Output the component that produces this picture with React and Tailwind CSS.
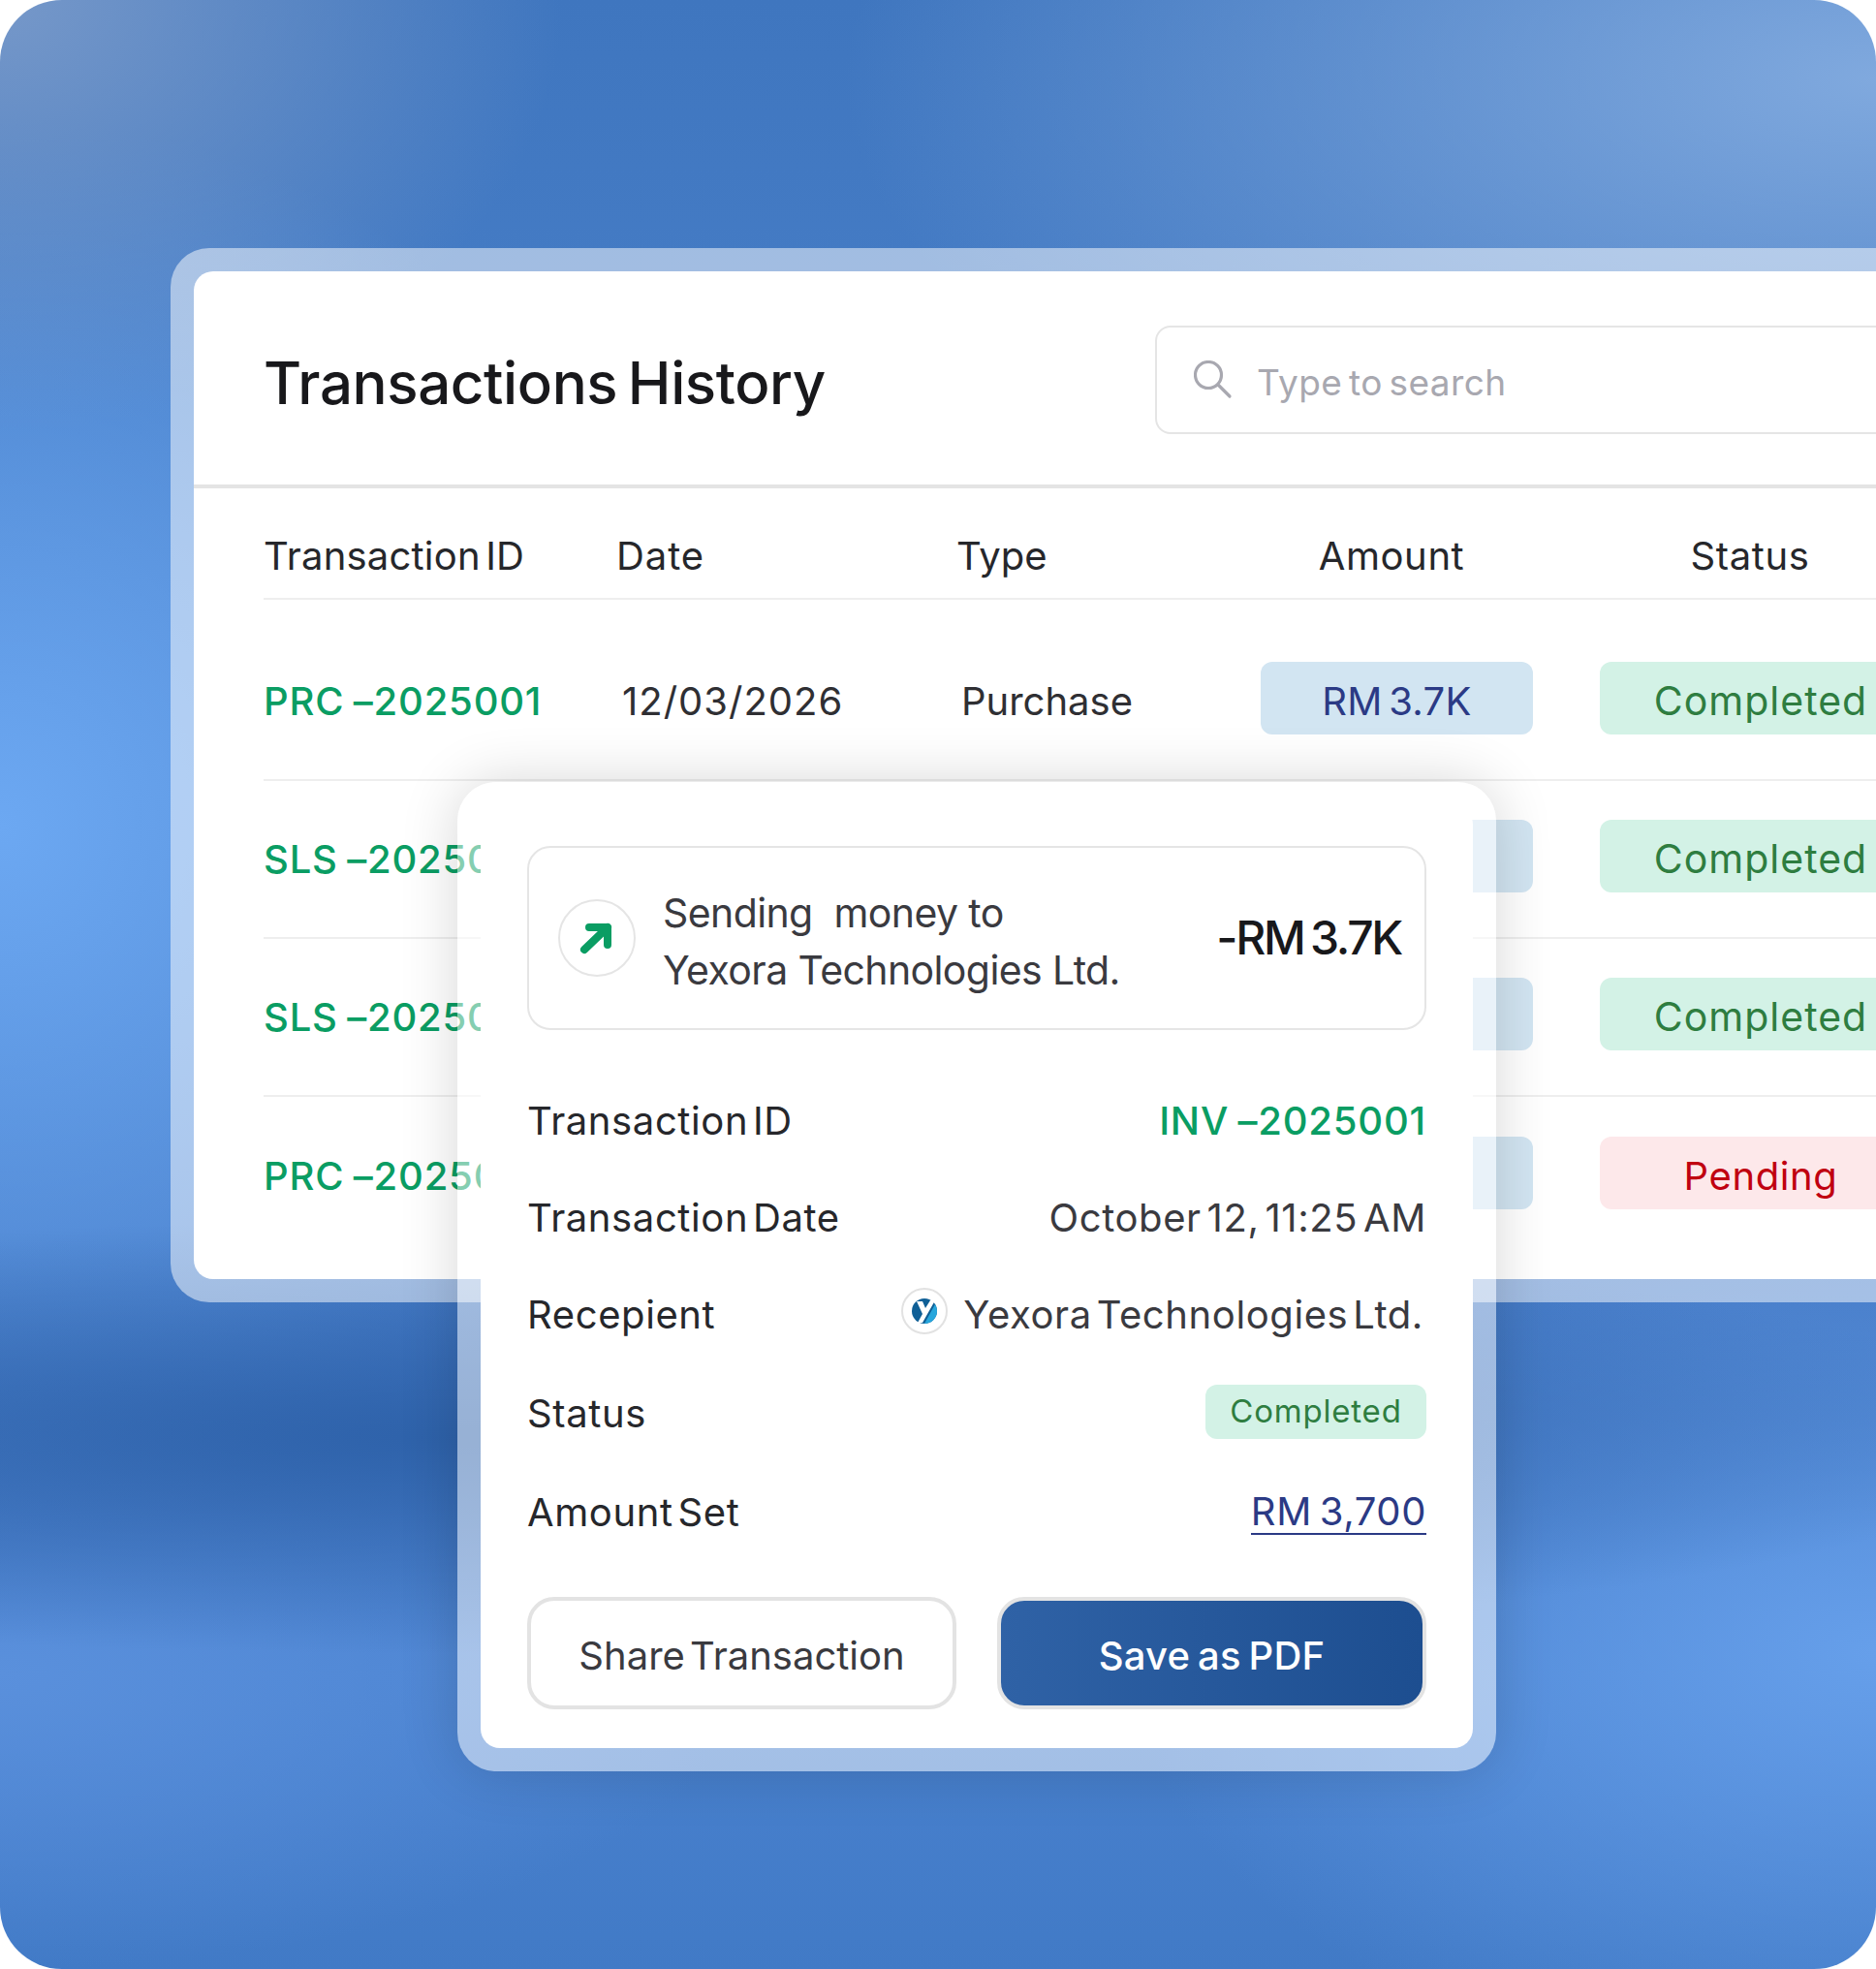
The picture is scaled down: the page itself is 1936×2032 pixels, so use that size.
const F = { fontFamily: "Inter, 'Liberation Sans', sans-serif" };

const rows = [
  { id: "PRC –2025001", status: "Completed", date: "12/03/2026", type: "Purchase", amount: "RM 3.7K", pt: "pt-[64px]" },
  { id: "SLS –2025002", status: "Completed", pt: "pt-[40px]" },
  { id: "SLS –2025003", status: "Completed", pt: "pt-[40px]" },
  { id: "PRC –2025004", status: "Pending", pt: "pt-[41px]" },
];

function Row({ r, last }) {
  const pending = r.status === "Pending";
  return (
    <div className={`grid grid-cols-[370px_350px_309px_350px_332px] items-center ${r.pt} ${last ? "" : "pb-[46px] border-b-2 border-[#eeeeee]"} text-[40px]`}>
      <div className="pt-[6px] text-[#0a9d63] font-medium whitespace-nowrap tracking-[0.8px] [word-spacing:-2px]">{r.id}</div>
      <div className="pt-[6px] text-[#2f2f33] tracking-[1px]">{r.date}</div>
      <div className="pt-[6px] text-[#2f2f33]">{r.type}</div>
      <div className="w-[281px] h-[75px] pt-[6px] rounded-[12px] bg-[#d2e5f2] text-[#2b3a85] flex items-center justify-center tracking-[0.3px] [word-spacing:-5px]">{r.amount}</div>
      <div className={`h-[75px] pt-[6px] rounded-[12px] flex items-center justify-center ${pending ? "bg-[#fde8ea] text-[#c00010] tracking-[0.6px]" : "bg-[#d3f2e6] text-[#2e7d40] text-[41px] tracking-[1px]"}`}>{r.status}</div>
    </div>
  );
}

function Detail({ label, children, h = "h-[100px]" }) {
  return (
    <div className={`flex items-center justify-between ${h} text-[40px] tracking-[0.6px] [word-spacing:-7px] text-[#26272b]`}>
      <span>{label}</span>
      {children}
    </div>
  );
}

export default function App() {
  return (
    <div style={F} className="relative w-[1936px] h-[2032px] overflow-hidden rounded-[64px] pt-[256px] pl-[176px] bg-[radial-gradient(ellipse_55%_24%_at_100%_4%,#80a9de_0%,#80a9de00_100%),radial-gradient(ellipse_30%_22%_at_0%_0%,#7698c9_0%,#7698c900_100%),radial-gradient(ellipse_85%_11%_at_25%_73%,#2e62aa_0%,#2e62aa00_100%),radial-gradient(ellipse_38%_36%_at_0%_42%,#6ca8f2_0%,#6ca8f200_100%),radial-gradient(ellipse_40%_22%_at_100%_84%,#669fea_0%,#669fea00_100%),radial-gradient(ellipse_40%_15%_at_0%_85%,#5a90dc_0%,#5a90dc00_100%),linear-gradient(180deg,#3f76bf_0%,#4d84ce_40%,#4378c4_72%,#4a82d0_85%,#417ac6_100%)]">
      <div className="w-[1900px] h-[1088px] rounded-[40px] bg-white/50 p-6">
        <div className="h-full rounded-[20px] bg-white overflow-hidden">
          <div className="flex items-center h-[220px] pl-[72px]">
            <h1 className="w-[920px] shrink-0 pt-[10px] text-[60px] font-medium tracking-[-0.4px] [word-spacing:-5px] text-[#18181b]">Transactions History</h1>
            <div className="flex items-center shrink-0 w-[800px] h-[112px] mt-[3px] rounded-[16px] border-2 border-[#e5e5e5] pl-[38px] gap-[25px]">
              <svg width="40" height="40" viewBox="0 0 40 40" fill="none" stroke="#a8a8b0" strokeWidth="3.2" strokeLinecap="round"><circle cx="15" cy="15" r="13.5" /><path d="M25 25l12 12" /></svg>
              <span className="pt-[6px] text-[37px] tracking-[0.4px] [word-spacing:-4px] text-[#a8a8b0]">Type to search</span>
            </div>
          </div>
          <div className="h-1 bg-[#e4e4e4]" />
          <div className="pl-[72px]">
            <div className="grid grid-cols-[364px_351px_314px_350px_340px] items-center h-[115px] pt-[26px] border-b-2 border-[#eeeeee] text-[40px] text-[#26272b]">
              <div className="tracking-[0.2px] [word-spacing:-6px]">Transaction ID</div>
              <div className="tracking-[0.9px]">Date</div>
              <div>Type</div>
              <div className="w-[270px] text-center tracking-[0.6px]">Amount</div>
              <div className="w-[310px] text-center tracking-[0.6px]">Status</div>
            </div>
            {rows.map((r, i) => <Row key={r.id} r={r} last={i === 3} />)}
          </div>
        </div>
      </div>

      <div className="absolute left-[472px] top-[807px] w-[1072px] h-[1021px] rounded-[40px] bg-white/50 p-6 shadow-[0_0_60px_rgba(0,0,0,0.16)]">
        <div className="h-full rounded-[20px] bg-white px-[48px] pt-[42px]">
          <div className="flex items-center h-[190px] rounded-[24px] border-2 border-[#e5e5e5] pl-[30px] pr-[24px]">
            <div className="flex items-center justify-center w-[80px] h-[80px] shrink-0 rounded-full border-2 border-[#e5e5e5]">
              <svg width="36" height="36" viewBox="0 0 36 36" fill="none" stroke="#0a9d63" strokeWidth="8" strokeLinecap="round" strokeLinejoin="round"><path d="M5 30L29 7" /><path d="M10 7h19v18" /></svg>
            </div>
            <div className="ml-[28px] pt-[8px] text-[41px] leading-[59px] tracking-[-0.6px] text-[#3a3a3f]">
              <div className="whitespace-pre">Sending  money to</div>
              <div>Yexora Technologies Ltd.</div>
            </div>
            <div className="ml-auto text-[48px] font-medium tracking-[-2.3px] [word-spacing:-4px] text-[#18181b]">-RM 3.7K</div>
          </div>
          <div className="mt-[44px]">
            <Detail label="Transaction ID"><span className="text-[#0a9d63] font-medium tracking-[0.8px] [word-spacing:-2px]">INV –2025001</span></Detail>
            <Detail label="Transaction Date"><span className="text-[#3a3a3f] [word-spacing:-6px]">October 12, 11:25 AM</span></Detail>
            <Detail label="Recepient">
              <span className="flex items-center gap-[16px] pr-[3px] text-[#3a3a3f]">
                <span className="flex items-center justify-center w-[48px] h-[48px] -mt-2 rounded-full border-2 border-[#e2e2e2]">
                  <svg width="26" height="26" viewBox="0 0 26 26">
                    <circle cx="13" cy="13" r="13" fill="#0f5f96" />
                    <path d="M13 26a13 13 0 0 0 13-13 13 13 0 0 0-2-7L13 26z" fill="#27a6dc" />
                    <path d="M5 3h6l3 7 5-8h5L11 25H6l5-9z" fill="#fff" />
                  </svg>
                </span>
                <span>Yexora Technologies Ltd.</span>
              </span>
            </Detail>
            <Detail label="Status" h="h-[104px]">
              <span className="flex items-center justify-center -mt-[5px] w-[228px] h-[56px] rounded-[12px] bg-[#d3f2e6] text-[33px] tracking-[0.8px] text-[#2e7d40]">Completed</span>
            </Detail>
            <Detail label="Amount Set" h="h-[100px]">
              <span className="border-b-2 border-[#2b3a85] text-[#2b3a85] leading-[44px] [word-spacing:-4px]">RM 3,700</span>
            </Detail>
          </div>
          <div className="flex gap-[42px] mt-[37px]">
            <button className="w-[443px] h-[116px] pt-[6px] rounded-[28px] border-4 border-[#e3e3e3] bg-white text-[40px] [word-spacing:-6px] text-[#3a3a3f]">Share Transaction</button>
            <button className="w-[443px] h-[116px] pt-[6px] rounded-[28px] border-4 border-[#e3e3e3] bg-linear-to-r from-[#2f62a6] to-[#1d4e90] text-[40px] font-medium tracking-[0.2px] [word-spacing:-3px] text-white">Save as PDF</button>
          </div>
        </div>
      </div>
    </div>
  );
}
